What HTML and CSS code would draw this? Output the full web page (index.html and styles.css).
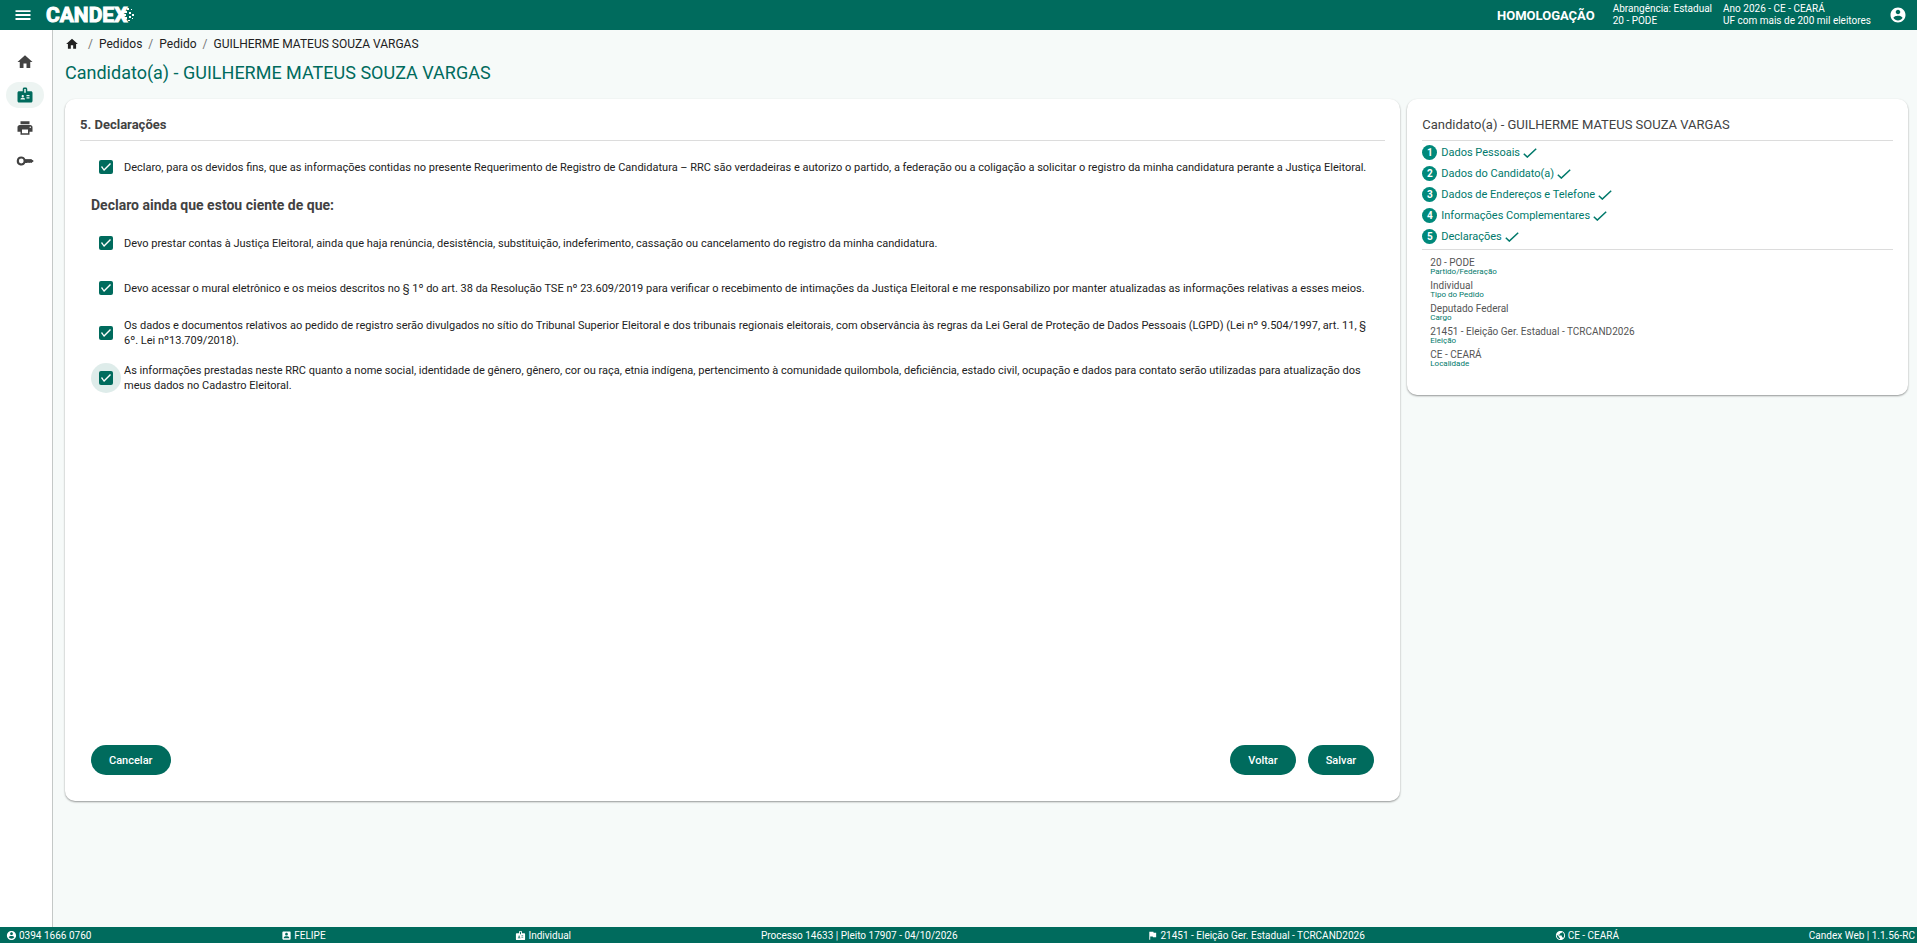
FILE: index.html
```html
<!DOCTYPE html>
<html lang="pt-BR">
<head>
    <meta charset="UTF-8">
    <meta name="viewport" content="width=device-width, initial-scale=1.0">
    <title>Candex</title>
    <link rel="stylesheet" href="styles.css">
</head>
<body>
    <!-- Icons -->
    <svg class="sprite" aria-hidden="true">
        <symbol id="i-home" viewBox="0 0 24 24"><path d="M10 20v-6h4v6h5v-8h3L12 3 2 12h3v8z"/></symbol>
        <symbol id="i-badge" viewBox="0 0 24 24"><path fill-rule="evenodd" d="M20 7h-5V4c0-1.100-.9-2-2-2h-2c-1.100 0-2 .9-2 2v3H4c-1.100 0-2 .9-2 2v11c0 1.100.9 2 2 2h16c1.100 0 2-.9 2-2V9c0-1.100-.9-2-2-2zM9 12c.83 0 1.500.67 1.500 1.500S9.830 15 9 15s-1.500-.67-1.500-1.500S8.170 12 9 12zm3 6H6v-.75c0-1 2-1.500 3-1.500s3 .5 3 1.500V18zm1-9h-2V4h2v5zm5 7.500h-4V15h4v1.500zm0-3h-4V12h4v1.500z"/></symbol>
        <symbol id="i-print" viewBox="0 0 24 24"><path d="M19 8H5c-1.660 0-3 1.340-3 3v6h4v4h12v-4h4v-6c0-1.660-1.340-3-3-3zm-3 11H8v-5h8v5zm3-7c-.55 0-1-.45-1-1s.45-1 1-1 1 .45 1 1-.45 1-1 1zm-1-9H6v4h12V3z"/></symbol>
        <symbol id="i-key" viewBox="0 0 24 24"><path fill-rule="evenodd" d="M7 6a6 6 0 1 0 5.650 8H20l3.500-2L20 10h-7.350A6 6 0 0 0 7 6zm0 2.800a3.200 3.200 0 1 1 0 6.400 3.200 3.200 0 0 1 0-6.400z"/><path d="M12 9.500h8.500l3 2.500-3 2.500-1.500-1-1.500 1-1.500-1-1.500 1H12z"/></symbol>
        <symbol id="i-user" viewBox="0 0 24 24"><path d="M12 2C6.480 2 2 6.480 2 12s4.480 10 10 10 10-4.480 10-10S17.520 2 12 2zm0 3c1.660 0 3 1.340 3 3s-1.340 3-3 3-3-1.340-3-3 1.340-3 3-3zm0 14.200c-2.500 0-4.710-1.280-6-3.220.03-1.990 4-3.080 6-3.080 1.990 0 5.970 1.090 6 3.080-1.290 1.940-3.500 3.220-6 3.220z"/></symbol>
        <symbol id="i-account" viewBox="0 0 24 24"><path fill-rule="evenodd" d="M3 5v14c0 1.100.89 2 2 2h14c1.100 0 2-.9 2-2V5c0-1.100-.9-2-2-2H5c-1.110 0-2 .9-2 2zm12 4c0 1.660-1.340 3-3 3s-3-1.340-3-3 1.340-3 3-3 3 1.340 3 3zm-9 8c0-2 4-3.100 6-3.100s6 1.100 6 3.100v1H6v-1z"/></symbol>
        <symbol id="i-flag" viewBox="0 0 24 24"><path d="M14.400 6 14 4H5v17h2v-7h5.600l.4 2h7V6z"/></symbol>
        <symbol id="i-globe" viewBox="0 0 24 24"><path d="M12 2C6.480 2 2 6.480 2 12s4.480 10 10 10 10-4.480 10-10S17.520 2 12 2zm-1 17.930c-3.950-.49-7-3.850-7-7.930 0-.62.080-1.210.21-1.790L9 15v1c0 1.100.9 2 2 2v1.930zm6.900-2.540c-.26-.81-1-1.390-1.900-1.390h-1v-3c0-.55-.45-1-1-1H8v-2h2c.55 0 1-.45 1-1V7h2c1.100 0 2-.9 2-2v-.41c2.930 1.190 5 4.060 5 7.410 0 2.080-.8 3.970-2.100 5.390z"/></symbol>
        <symbol id="i-menu" viewBox="0 0 24 24"><path d="M2 18.500h20V16H2v2.500zm0-5.200h20v-2.600H2v2.600zM2 5.500V8h20V5.500H2z"/></symbol>
        <symbol id="i-check" viewBox="0 0 14 10"><path fill="none" stroke="currentColor" stroke-width="1.500" d="M.8 5.800 4.300 9.100 13.200.8"/></symbol>
    </svg>

    <header class="topbar">
        <button class="menu-btn" aria-label="Menu"><svg class="icon"><use href="#i-menu"/></svg></button>
        <a class="logo" href="#">CANDEX<svg class="logo-dots" viewBox="0 0 12 20"><path d="M0 6h5v2H0zM0 9h4v2H0zM0 12h5v2H0zM5 3h2v2H5zM7 7h2v2H7zM9 4h1v1H9zM10 9h2v2h-2zM7 11h2v2H7zM10 13h1v1h-1zM6 15h2v1H6z"/></svg></a>
        <strong class="env">HOMOLOGAÇÃO</strong>
        <div class="top-info">Abrangência: Estadual<br>20 - PODE</div>
        <div class="top-info">Ano 2026 - CE - CEARÁ<br>UF com mais de 200 mil eleitores</div>
        <button class="user-btn" aria-label="Usuário"><svg class="icon"><use href="#i-user"/></svg></button>
    </header>

    <div class="layout">
        <nav class="sidebar">
            <a href="#" aria-label="Início"><svg class="icon"><use href="#i-home"/></svg></a>
            <a href="#" class="active" aria-label="Pedidos"><svg class="icon"><use href="#i-badge"/></svg></a>
            <a href="#" aria-label="Imprimir"><svg class="icon"><use href="#i-print"/></svg></a>
            <a href="#" aria-label="Chave"><svg class="icon"><use href="#i-key"/></svg></a>
        </nav>

        <main class="content">
            <nav class="breadcrumb">
                <a href="#" aria-label="Início"><svg class="icon"><use href="#i-home"/></svg></a>
                <span class="sep">/</span>
                <a href="#">Pedidos</a>
                <span class="sep">/</span>
                <a href="#">Pedido</a>
                <span class="sep">/</span>
                <span>GUILHERME MATEUS SOUZA VARGAS</span>
            </nav>
            <h1>Candidato(a) - GUILHERME MATEUS SOUZA VARGAS</h1>

            <div class="columns">
                <form class="card form-card">
                    <h2 class="card-title bold">5. Declarações</h2>

                    <div class="form-body">
                        <div class="declaration">
                            <input type="checkbox" id="decl1" checked>
                            <label for="decl1">Declaro, para os devidos fins, que as informações contidas no presente Requerimento de Registro de Candidatura – RRC são verdadeiras e autorizo o partido, a federação ou a coligação a solicitar o registro da minha candidatura perante a Justiça Eleitoral.</label>
                        </div>

                        <h3>Declaro ainda que estou ciente de que:</h3>

                        <div class="declaration">
                            <input type="checkbox" id="decl2" checked>
                            <label for="decl2">Devo prestar contas à Justiça Eleitoral, ainda que haja renúncia, desistência, substituição, indeferimento, cassação ou cancelamento do registro da minha candidatura.</label>
                        </div>
                        <div class="declaration">
                            <input type="checkbox" id="decl3" checked>
                            <label for="decl3">Devo acessar o mural eletrônico e os meios descritos no § 1º do art. 38 da Resolução TSE nº 23.609/2019 para verificar o recebimento de intimações da Justiça Eleitoral e me responsabilizo por manter atualizadas as informações relativas a esses meios.</label>
                        </div>
                        <div class="declaration">
                            <input type="checkbox" id="decl4" checked>
                            <label for="decl4">Os dados e documentos relativos ao pedido de registro serão divulgados no sítio do Tribunal Superior Eleitoral e dos tribunais regionais eleitorais, com observância às regras da Lei Geral de Proteção de Dados Pessoais (LGPD) (Lei nº 9.504/1997, art. 11, § 6º. Lei nº13.709/2018).</label>
                        </div>
                        <div class="declaration">
                            <input type="checkbox" id="decl5" class="focused" checked>
                            <label for="decl5">As informações prestadas neste RRC quanto a nome social, identidade de gênero, gênero, cor ou raça, etnia indígena, pertencimento à comunidade quilombola, deficiência, estado civil, ocupação e dados para contato serão utilizadas para atualização dos meus dados no Cadastro Eleitoral.</label>
                        </div>
                    </div>

                    <div class="actions">
                        <button type="button" class="btn btn-cancel">Cancelar</button>
                        <button type="button" class="btn">Voltar</button>
                        <button type="submit" class="btn">Salvar</button>
                    </div>
                </form>

                <aside class="card">
                    <h2 class="card-title">Candidato(a) - GUILHERME MATEUS SOUZA VARGAS</h2>
                    <ol class="steps">
                        <li><span class="num">1</span><a href="#">Dados Pessoais</a><svg class="check"><use href="#i-check"/></svg></li>
                        <li><span class="num">2</span><a href="#">Dados do Candidato(a)</a><svg class="check"><use href="#i-check"/></svg></li>
                        <li><span class="num">3</span><a href="#">Dados de Endereços e Telefone</a><svg class="check"><use href="#i-check"/></svg></li>
                        <li><span class="num">4</span><a href="#">Informações Complementares</a><svg class="check"><use href="#i-check"/></svg></li>
                        <li><span class="num">5</span><a href="#">Declarações</a><svg class="check"><use href="#i-check"/></svg></li>
                    </ol>
                    <div class="summary">
                        <div class="info">20 - PODE<small>Partido/Federação</small></div>
                        <div class="info">Individual<small>Tipo do Pedido</small></div>
                        <div class="info">Deputado Federal<small>Cargo</small></div>
                        <div class="info">21451 - Eleição Ger. Estadual - TCRCAND2026<small>Eleição</small></div>
                        <div class="info">CE - CEARÁ<small>Localidade</small></div>
                    </div>
                </aside>
            </div>
        </main>
    </div>

    <footer class="footer">
        <span><svg class="icon"><use href="#i-user"/></svg>0394 1666 0760</span>
        <span><svg class="icon"><use href="#i-account"/></svg>FELIPE</span>
        <span><svg class="icon"><use href="#i-badge"/></svg>Individual</span>
        <span>Processo 14633 | Pleito 17907 - 04/10/2026</span>
        <span><svg class="icon"><use href="#i-flag"/></svg>21451 - Eleição Ger. Estadual - TCRCAND2026</span>
        <span><svg class="icon"><use href="#i-globe"/></svg>CE - CEARÁ</span>
        <span>Candex Web | 1.1.56-RC</span>
    </footer>
</body>
</html>
```
FILE: styles.css
```css
/* General Styles */
* {
    box-sizing: border-box;
}

body {
    font-family: Roboto, "Liberation Sans", sans-serif;
    font-size: 12px;
    background-color: #f6faf9;
    color: #212121;
    margin: 0;
    display: flex;
    flex-direction: column;
    min-height: 100vh;
}

a {
    color: inherit;
    text-decoration: none;
}

button {
    font-family: inherit;
    border: none;
    padding: 0;
    cursor: pointer;
}

h1, h2, h3 {
    margin: 0;
}

.sprite {
    display: none;
}

.icon {
    width: 18px;
    height: 18px;
    fill: currentColor;
    display: block;
    flex: none;
}

/* Top bar */
.topbar {
    height: 30px;
    background-color: #006b5d;
    color: #fff;
    display: flex;
    align-items: center;
    padding: 0 10px 0 14px;
}

.menu-btn,
.user-btn {
    background: none;
    color: #fff;
}

.logo {
    display: flex;
    align-items: center;
    margin-left: 14px;
    margin-right: auto;
    font-family: "Liberation Sans Narrow", Roboto, sans-serif;
    font-size: 21px;
    font-weight: 700;
    line-height: 30px;
    -webkit-text-stroke: 1px #fff;
}

.logo-dots {
    width: 12px;
    height: 20px;
    margin-left: -5px;
    fill: #fff;
}

.env {
    font-size: 13px;
    margin-right: 18px;
}

.top-info {
    font-size: 10px;
    line-height: 12px;
    margin-right: 11px;
}

.user-btn {
    margin-left: 7px;
}

/* Layout */
.layout {
    display: flex;
    flex: 1;
}

.sidebar {
    width: 53px;
    flex: none;
    background-color: #fff;
    border-right: 1px solid #c4c8c7;
    display: flex;
    flex-direction: column;
    align-items: center;
    gap: 7px;
    padding: 19px 2px 0 0;
    color: #424242;
}

.sidebar a {
    width: 38px;
    height: 26px;
    border-radius: 13px;
    display: flex;
    align-items: center;
    justify-content: center;
}

.sidebar a.active {
    background-color: #edf4f2;
    color: #006b5d;
}

.content {
    flex: 1;
    min-width: 0;
    padding: 6px 9px 16px 12px;
}

.breadcrumb {
    display: flex;
    align-items: center;
    line-height: 16px;
}

.breadcrumb .icon {
    width: 14px;
    height: 14px;
    margin-right: 3px;
}

.breadcrumb .sep {
    color: #757575;
    width: 5px;
    margin: 0 6px;
}

h1 {
    font-size: 18px;
    font-weight: 400;
    line-height: 22px;
    color: #006b5d;
    margin: 10px 0 15px;
}

/* Cards */
.columns {
    display: grid;
    grid-template-columns: 8fr 3fr;
    gap: 7px;
    align-items: start;
}

.card {
    background-color: #fff;
    border-radius: 10px;
    padding: 15px;
    box-shadow: 0 1px 2px rgba(0, 0, 0, 0.4);
}

.card-title {
    font-size: 13px;
    font-weight: 400;
    line-height: 22px;
    color: #424242;
    padding-bottom: 4px;
    border-bottom: 1px solid #dcdcdc;
}

.bold {
    font-weight: 700;
}

.form-card {
    min-height: 702px;
    display: flex;
    flex-direction: column;
}

.form-body {
    padding: 11px 11px 0;
}

h3 {
    font-size: 14px;
    line-height: 20px;
    color: #424242;
    margin: 13px 0;
}

.declaration {
    display: flex;
    align-items: center;
    gap: 11px;
    padding-left: 8px;
    min-height: 30px;
    font-size: 11px;
    line-height: 15px;
}

.declaration + .declaration {
    margin-top: 15px;
}

.declaration label {
    padding-right: 4px;
}

input[type="checkbox"] {
    appearance: none;
    position: relative;
    isolation: isolate;
    flex: none;
    width: 14px;
    height: 14px;
    margin: 0;
    border-radius: 2px;
    border: 2px solid #006b5d;
    cursor: pointer;
}

input[type="checkbox"]:checked {
    border: none;
    background-color: #006b5d;
}

input[type="checkbox"]:checked::before {
    content: "";
    display: block;
    height: 14px;
    background-color: #fff;
    clip-path: polygon(2px 7px, 3px 6px, 5px 9px, 11px 3px, 12px 4px, 5px 11px);
}

input.focused::after {
    content: "";
    position: absolute;
    inset: -8px;
    z-index: -1;
    border-radius: 50%;
    background-color: rgba(0, 107, 93, 0.13);
}

/* Buttons */
.actions {
    display: flex;
    gap: 12px;
    margin-top: auto;
    padding: 0 11px 11px;
}

.btn {
    height: 30px;
    padding: 0 18px;
    border-radius: 15px;
    background-color: #006b5d;
    color: #fff;
    font-size: 11px;
    font-weight: 500;
}

.btn-cancel {
    margin-right: auto;
}

/* Steps */
.steps {
    list-style: none;
    margin: 0;
    padding: 1px 0 2px;
    border-bottom: 1px solid #dcdcdc;
    font-size: 11px;
    color: #00796b;
}

.steps li {
    display: flex;
    align-items: center;
    height: 21px;
}

.num {
    width: 15px;
    height: 15px;
    border-radius: 50%;
    background-color: #00897b;
    color: #fff;
    font-size: 10px;
    font-weight: 700;
    line-height: 15px;
    text-align: center;
    margin-right: 4px;
}

.check {
    width: 14px;
    height: 10px;
    margin-left: 3px;
}

.summary {
    padding: 7px 8px 8px;
    color: #555;
}

.info {
    font-size: 10px;
    line-height: 11px;
    padding-bottom: 5px;
}

.info small {
    display: block;
    font-size: 8px;
    line-height: 7px;
    color: #00796b;
}

/* Footer */
.footer {
    height: 16px;
    background-color: #006b5d;
    color: #fff;
    display: flex;
    align-items: center;
    justify-content: space-between;
    padding: 0 2px 0 6px;
    font-size: 10px;
}

.footer span {
    display: flex;
    align-items: center;
    gap: 2px;
}

.footer .icon {
    width: 11px;
    height: 11px;
}
```
